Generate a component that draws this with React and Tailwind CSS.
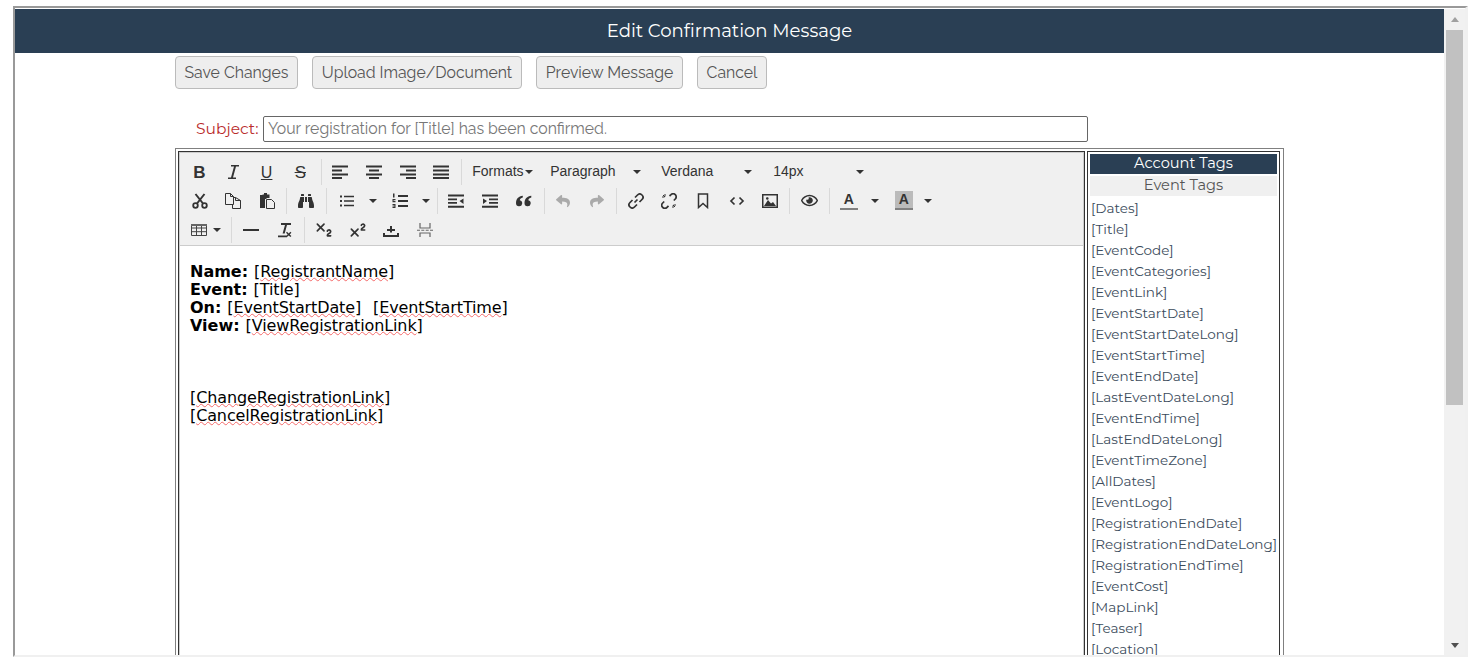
import React from "react";
import { FaBinoculars, FaRegEye, FaReply, FaShare } from "react-icons/fa";
import { Subscript, Superscript } from "lucide-react";

const Sep = () => <div className="ml-[3px] mr-[2px] w-px h-[26px] shrink-0 bg-[#d9d9d9]" />;
const SepWide = () => <div className="ml-[3px] mr-[3px] w-px h-[26px] shrink-0 bg-[#d9d9d9]" />;
const SepNarrow = () => <div className="ml-[2px] mr-[2px] w-px h-[26px] shrink-0 bg-[#d9d9d9]" />;
const Btn = ({ children }) => <div className="w-[33.67px] h-[29px] shrink-0 flex items-center justify-center text-[#333]">{children}</div>;
const Caret = () => <div className="w-0 h-0 border-x-[4px] border-x-transparent border-t-[4px] border-t-[#333]" />;
const Split = ({ children }) => (
  <div className="w-[52px] h-[29px] shrink-0 flex items-center">
    <div className="w-[34px] flex items-center justify-center">{children}</div>
    <div className="w-[16px] flex justify-center ml-px"><Caret /></div>
  </div>
);
const S = ({ children }) => <svg width="16" height="16" viewBox="0 0 16 16" fill="#333">{children}</svg>;

const ItalicI = () => <S><path d="M6 1h8v1.600h-3L8 13.400h3V15H3v-1.600h3L9 2.600H6z" /></S>;
const AlignLeft = () => <S><path d="M0 1.500h16v2H0zM0 5.500h10v2H0zM0 9.500h16v2H0zM0 13h10v2H0z" /></S>;
const AlignCenter = () => <S><path d="M0 1.500h16v2H0zM3 5.500h10v2H3zM0 9.500h16v2H0zM3 13h10v2H3z" /></S>;
const AlignRight = () => <S><path d="M0 1.500h16v2H0zM6 5.500h10v2H6zM0 9.500h16v2H0zM6 13h10v2H6z" /></S>;
const Justify = () => <S><path d="M0 1.500h16v2H0zM0 5.500h16v2H0zM0 9.500h16v2H0zM0 13h16v2H0z" /></S>;
const Cut = () => <S><g fill="none" stroke="#333"><circle cx="3.500" cy="12.500" r="2.300" strokeWidth="1.800" /><circle cx="12.500" cy="12.500" r="2.300" strokeWidth="1.800" /><path strokeWidth="2" d="M5 10.500L12.500 1M11 10.500L3.500 1" /></g></S>;
const Copy = () => <S><path fill="none" stroke="#333" strokeWidth="1" d="M.5.500h5l3 3v8H.5zM5.500.500v3h3M8.500 4.500h2l5 3v8h-8v-4M10.500 4.500v3h5" /></S>;
const Paste = () => <S><path d="M5 0h3v1.500h2.500V5H8l-1 1H6v9H1V2h2.500V1.500H5z" /><path fill="none" stroke="#333" strokeWidth="1" d="M7.500 6.500h5l3 3v6h-8z" /></S>;
const Bullist = () => <S><path d="M1 2.500h2v2H1zM1 7h2v2H1zM1 11.500h2v2H1zM5 2.700h10v1.600H5zM5 7.200h10v1.600H5zM5 11.700h10v1.600H5z" /></S>;
const Numlist = () => <S><path d="M1 0.500h1.500v4H1zM0.500 6h3v1.200h-2v.8h2v1.200h-3zM0.500 11h3v4h-3v-1h2v-.5h-2v-1h2V12h-2zM6 2h10v2H6zM6 7h10v2H6zM6 12h10v2H6z" /></S>;
const Outdent = () => <S><path d="M0 1.500h16v2H0zM0 5.500h9v1.700H0zM0 9h9v1.700H0zM0 12.700h16v2H0zM15.500 5.500v5.500L11.500 8z" /></S>;
const Indent = () => <S><path d="M0 1.500h16v2H0zM7 5.500h9v1.700H7zM7 9h9v1.700H7zM0 12.700h16v2H0zM1 5.500v5.500L5 8z" /></S>;
const Quote = () => <S><path d="M0 10.300C0 6 2.500 3.200 6.800 2.800v1.600C5 4.800 4 5.800 3.800 7.200a3.100 3.100 0 1 1-3.800 3.100z" /><path d="M8.500 10.300C8.500 6 11 3.200 15.300 2.800v1.600c-1.800.4-2.800 1.400-3 2.800a3.100 3.100 0 1 1-3.800 3.100z" /></S>;
const Code = () => <S><path fill="none" stroke="#333" strokeWidth="1.700" d="M5.500 4.500L2 8l3.500 3.500M10.500 4.500L14 8l-3.500 3.500" /></S>;
const LinkI = () => <S><path fill="none" stroke="#333" strokeWidth="1.700" d="M6.500 9.500l3-3M7 4.500l2.500-2.500a2.600 2.600 0 0 1 4.500 4.500L11.500 9M4.500 7L2 9.500A2.600 2.600 0 0 0 6.500 14L9 11.500" /></S>;
const UnlinkI = () => <S><path fill="none" stroke="#333" strokeWidth="1.700" d="M8.500 3l1.500-1.300a2.600 2.600 0 0 1 4.300 4.300L12.800 7.500M3.200 8.500L1.700 10a2.600 2.600 0 0 0 4.300 4.300L7.500 12.800" /><path fill="none" stroke="#333" strokeWidth="1" d="M1 4h2.500M4 1v2.500M12 15v-2.500M15 12h-2.500M2 2l2 2M14 14l-2-2" /></S>;
const Bookmark = () => <S><path fill="none" stroke="#333" strokeWidth="1.500" d="M3.500 1h9v13.500L8 10.500l-4.500 4z" /></S>;
const ImageI = () => <S><path d="M0 1h16v14H0zM1.500 2.500v11h13v-11z" fillRule="evenodd" /><path d="M2 13l4-6 3 3.500L11 9l3 4zM4 5.500a1.300 1.300 0 1 0 0-.1z" /></S>;
const TableI = () => <S><path fill="none" stroke="#444" strokeWidth="1" d="M.5 2.500h15v11H.5zM.5 6h15M.5 9.700h15M5.500 2.500v11M10.500 2.500v11" /><path d="M0 2h16v2H0z" fill="#666" /></S>;
const Hr = () => <S><path d="M0 7h16v2H0z" /></S>;
const RemoveF = () => <S><path d="M5 1h10v2h-4L8.700 11.500H6.600L9 3H5zM2 13.500h9v1.700H2zM11 9.700l1.700 1.700 1.700-1.700 1 1-1.700 1.700 1.700 1.700-1 1-1.700-1.700-1.700 1.700-1-1 1.700-1.700-1.700-1.700z" /></S>;
const Upload = () => <S><path d="M0 11h2v2h12v-2h2v4H0zM7 4h2v3h3v2H9v1.500H7V9H4V7h3z" /></S>;
const PageBreak = () => <S><path fill="none" stroke="#666" strokeWidth="1.200" d="M3 1v5h10V1M3 15v-4h10v4" /><path d="M0 7.700h3v1H0zM4.300 7.700h3v1h-3zM8.700 7.700h3v1h-3zM13 7.700h3v1h-3z" fill="#666" /></S>;

const Select = ({ label, cls }) => (
  <div className={cls}>
    <span className="font-['Liberation_Sans',sans-serif] text-[14px] text-[#333]">{label}</span>
    <Caret />
  </div>
);

const Sq = ({ children }) => <span className="underline decoration-wavy decoration-[#f46a6a] decoration-1 [text-underline-offset:0px]">{children}</span>;

const tags = ["[Dates]","[Title]","[EventCode]","[EventCategories]","[EventLink]","[EventStartDate]","[EventStartDateLong]","[EventStartTime]","[EventEndDate]","[LastEventDateLong]","[EventEndTime]","[LastEndDateLong]","[EventTimeZone]","[AllDates]","[EventLogo]","[RegistrationEndDate]","[RegistrationEndDateLong]","[RegistrationEndTime]","[EventCost]","[MapLink]","[Teaser]","[Location]"];

const Button = ({ children, cls }) => (
  <div className={"h-[33px] flex items-center justify-center rounded-[4px] border border-[#bbb] bg-[#eee] text-[15.8px] text-[#555] font-['Raleway','Lato',sans-serif] " + cls}>{children}</div>
);

export default function App() {
  return (
    <div className="w-[1481px] h-[668px] overflow-hidden bg-white pl-[13px] pt-[6px]">
      <div className="w-[1455px] h-[651px] border-t-2 border-l-2 border-t-[#999] border-l-[#999] border-r-[3px] border-b-2 border-r-[#f0f0f0] border-b-[#f0f0f0] pt-px flex overflow-hidden">
        <div className="w-[1429px] shrink-0 h-full overflow-hidden">
          <div className="h-[44px] bg-[#2a3f54] flex items-center justify-center text-white text-[18.1px] font-['Montserrat','Inter',sans-serif]">Edit Confirmation Message</div>
          <div className="pl-[160px] pt-[3px] flex gap-[14px]">
            <Button cls="w-[123px]">Save Changes</Button>
            <Button cls="w-[210px]">Upload Image/Document</Button>
            <Button cls="w-[147px]">Preview Message</Button>
            <Button cls="w-[70px]">Cancel</Button>
          </div>
          <div className="pl-[181px] mt-[27px] flex items-center h-[26px]">
            <span className="w-[67px] text-[15.5px] text-[#b92c2c] font-['Montserrat','Inter',sans-serif]">Subject:</span>
            <div className="w-[825px] h-[26px] border border-[#666] rounded-[2px] flex items-center pl-[4px] text-[15.8px] text-[#777] font-['Raleway','Lato',sans-serif]">Your registration for [Title] has been confirmed.</div>
          </div>
          <div className="ml-[160px] mt-[6px] w-[1109px] h-[600px] border border-[#808080] p-[2px] flex gap-[2px]">
            <div className="w-[907px] shrink-0 border border-[#333] h-full">
              <div className="border border-[#ccc] h-full">
                <div className="h-[93px] bg-[#f0f0f0] border-b border-[#ccc] pt-[4px] pl-[3px]">
                  <div className="flex items-center h-[29px]">
                    <Btn><span className="mt-[2px] -ml-px font-['Liberation_Sans',sans-serif] font-bold text-[17px]">B</span></Btn>
                    <Btn><ItalicI /></Btn>
                    <Btn><span className="mt-[2px] -ml-px font-['Liberation_Sans',sans-serif] underline text-[16px]">U</span></Btn>
                    <Btn><span className="mt-[2px] -ml-px font-['Liberation_Sans',sans-serif] line-through text-[17px]">S</span></Btn>
                    <Sep />
                    <Btn><AlignLeft /></Btn><Btn><AlignCenter /></Btn><Btn><AlignRight /></Btn><Btn><Justify /></Btn>
                    <Sep />
                    <Select label="Formats" cls="w-[76px] pl-[8px] pr-[7px] flex items-center justify-between" />
                    <Select label="Paragraph" cls="w-[109px] pl-[10px] pr-[8px] flex items-center justify-between" />
                    <Select label="Verdana" cls="w-[111px] pl-[12px] pr-[8px] flex items-center justify-between" />
                    <Select label="14px" cls="w-[109px] pl-[13px] pr-[5px] flex items-center justify-between" />
                  </div>
                  <div className="flex items-center h-[29px]">
                    <Btn><Cut /></Btn><Btn><Copy /></Btn><Btn><Paste /></Btn>
                    <SepNarrow />
                    <Btn><FaBinoculars size={16} /></Btn>
                    <SepWide />
                    <Split><Bullist /></Split>
                    <div className="ml-px"><Split><Numlist /></Split></div>
                    <SepNarrow />
                    <Btn><Outdent /></Btn><Btn><Indent /></Btn><Btn><Quote /></Btn>
                    <Sep />
                    <Btn><FaReply size={14} color="#aaa" /></Btn><Btn><FaShare size={14} color="#aaa" /></Btn>
                    <SepNarrow />
                    <Btn><LinkI /></Btn><Btn><UnlinkI /></Btn><Btn><Bookmark /></Btn><Btn><Code /></Btn><Btn><ImageI /></Btn>
                    <SepNarrow />
                    <Btn><FaRegEye size={17} /></Btn>
                    <Sep />
                    <Split>
                      <div className="flex flex-col items-center w-[18px]">
                        <span className="font-['Liberation_Sans',sans-serif] font-bold text-[14px] leading-[17px] text-[#333]">A</span>
                        <div className="w-[18px] h-[2px] bg-[#808080]" />
                      </div>
                    </Split>
                    <div className="w-[52px] h-[29px] shrink-0 flex items-center">
                      <div className="w-[37px] pl-[3px] flex items-center justify-center">
                        <div className="flex flex-col items-center w-[18px]">
                          <span className="w-[18px] text-center bg-[#bbb] font-['Liberation_Sans',sans-serif] font-bold text-[14px] leading-[17px] text-[#333]">A</span>
                          <div className="w-[18px] h-[2px] bg-[#808080]" />
                        </div>
                      </div>
                      <div className="w-[12px] flex justify-center ml-px"><Caret /></div>
                    </div>
                  </div>
                  <div className="flex items-center h-[29px] -ml-px">
                    <div className="w-[46px] h-[29px] pl-[9px] flex items-center gap-[6px] shrink-0"><TableI /><Caret /></div>
                    <Sep />
                    <Btn><Hr /></Btn><Btn><RemoveF /></Btn>
                    <Sep />
                    <Btn><Subscript size={20} strokeWidth={2} /></Btn><Btn><Superscript size={20} strokeWidth={2} /></Btn><Btn><Upload /></Btn><Btn><PageBreak /></Btn>
                  </div>
                </div>
                <div className="pl-[10px] pt-[17px] text-[16px] leading-[18px] tracking-[-0.12px] [word-spacing:1px] text-black font-['DejaVu_Sans','Verdana',sans-serif]">
                  <div><b className="tracking-normal">Name:</b> [<Sq>RegistrantName</Sq>]</div>
                  <div><b className="tracking-normal">Event:</b> [Title]</div>
                  <div><b className="tracking-normal">On:</b> [<Sq>EventStartDate</Sq>]&nbsp; [<Sq>EventStartTime</Sq>]</div>
                  <div><b className="tracking-normal">View:</b> [<Sq>ViewRegistrationLink</Sq>]</div>
                  <div className="h-[54px]" />
                  <div>[<Sq>ChangeRegistrationLink</Sq>]</div>
                  <div>[<Sq>CancelRegistrationLink</Sq>]</div>
                </div>
              </div>
            </div>
            <div className="w-[193px] shrink-0 border border-[#333] h-full pt-[2px] px-[2px] overflow-hidden">
              <div className="h-[20px] bg-[#2a3f54] text-white flex items-center justify-center text-[14.6px] pb-px font-['Montserrat','Inter',sans-serif]">Account Tags</div>
              <div className="mt-[2px] h-[20px] bg-[#f0f0f0] text-[#555] flex items-center justify-center text-[14.6px] pb-px font-['Montserrat','Inter',sans-serif]">Event Tags</div>
              <div className="pt-[2px] pl-px">
                {tags.map((t) => (
                  <div key={t} className="h-[21px] leading-[21px] text-[13.55px] text-[#3b4b5b] whitespace-nowrap font-['Montserrat','Inter',sans-serif]">{t}</div>
                ))}
              </div>
            </div>
          </div>
        </div>
        <div className="w-[21px] shrink-0 h-full bg-[#f1f1f1] flex flex-col items-center pt-[8px]">
          <div className="w-0 h-0 border-x-[4px] border-x-transparent border-b-[5px] border-b-[#a0a0a0]" />
          <div className="w-[17px] h-[375px] bg-[#c1c1c1] mt-[8px]" />
          <div className="flex-1" />
          <div className="w-0 h-0 border-x-[4px] border-x-transparent border-t-[5px] border-t-[#505050] mb-[7px]" />
        </div>
      </div>
    </div>
  );
}
